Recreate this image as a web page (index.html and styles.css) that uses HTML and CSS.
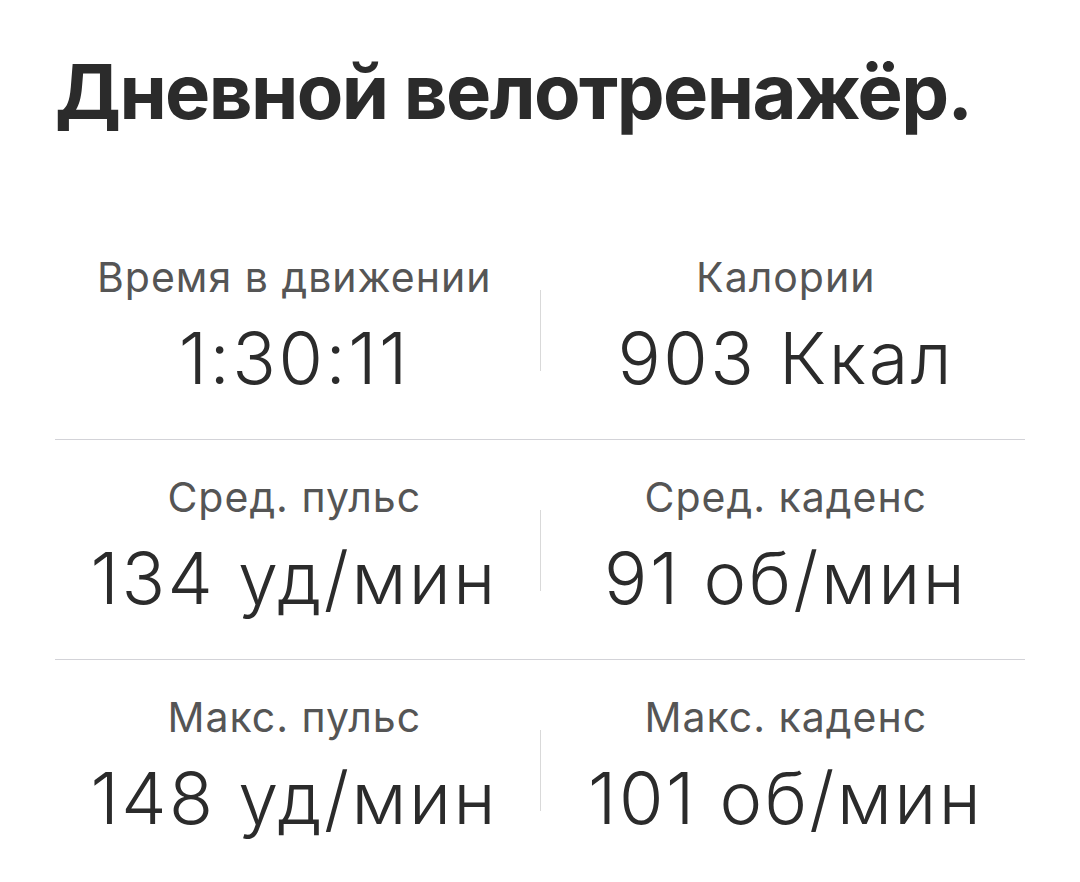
FILE: index.html
```html
<!DOCTYPE html>
<html lang="ru">
<head>
<meta charset="utf-8">
<link rel="stylesheet" href="styles.css">
</head>
<body>
<div class="page">
  <h1 class="title">Дневной велотренажёр.</h1>
  <div class="stats">
    <div class="row">
      <div class="cell"><div class="label">Время в движении</div><div class="value">1:30:11</div></div>
      <div class="sep"></div>
      <div class="cell"><div class="label">Калории</div><div class="value">903 Ккал</div></div>
    </div>
    <div class="row">
      <div class="cell"><div class="label">Сред. пульс</div><div class="value">134 уд/мин</div></div>
      <div class="sep"></div>
      <div class="cell"><div class="label">Сред. каденс</div><div class="value">91 об/мин</div></div>
    </div>
    <div class="row">
      <div class="cell"><div class="label">Макс. пульс</div><div class="value">148 уд/мин</div></div>
      <div class="sep"></div>
      <div class="cell"><div class="label">Макс. каденс</div><div class="value">101 об/мин</div></div>
    </div>
  </div>
</div>
</body>
</html>
```
FILE: styles.css
```css
html, body {
  margin: 0;
  padding: 0;
  background: #ffffff;
}
body {
  font-family: Inter, "Noto Sans", sans-serif;
  color: #2b2b2b;
}
.page {
  padding: 46px 55px 0 55px;
}
.title {
  margin: 0 0 84px 0;
  font-size: 76px;
  line-height: 90px;
  font-weight: 700;
  color: #2b2b2b;
  letter-spacing: -1.6px;
  white-space: nowrap;
}
.stats {
  display: flex;
  flex-direction: column;
}
.row {
  display: grid;
  grid-template-columns: 1fr 1px 1fr;
  column-gap: 6px;
  height: 220px;
  box-sizing: border-box;
  border-bottom: 1px solid #d3d3d8;
}
.row:last-child {
  border-bottom: none;
}
.cell {
  padding-top: 33px;
  text-align: center;
}
.label {
  font-size: 41px;
  line-height: 48px;
  color: #555555;
  font-weight: 400;
  letter-spacing: 1px;
}
.value {
  margin-top: 17px;
  font-size: 72px;
  line-height: 80px;
  font-weight: 300;
  color: #2b2b2b;
  letter-spacing: 2.5px;
}
.sep {
  align-self: start;
  margin-top: 70px;
  height: 81px;
  background: #d9d9d9;
}
```
